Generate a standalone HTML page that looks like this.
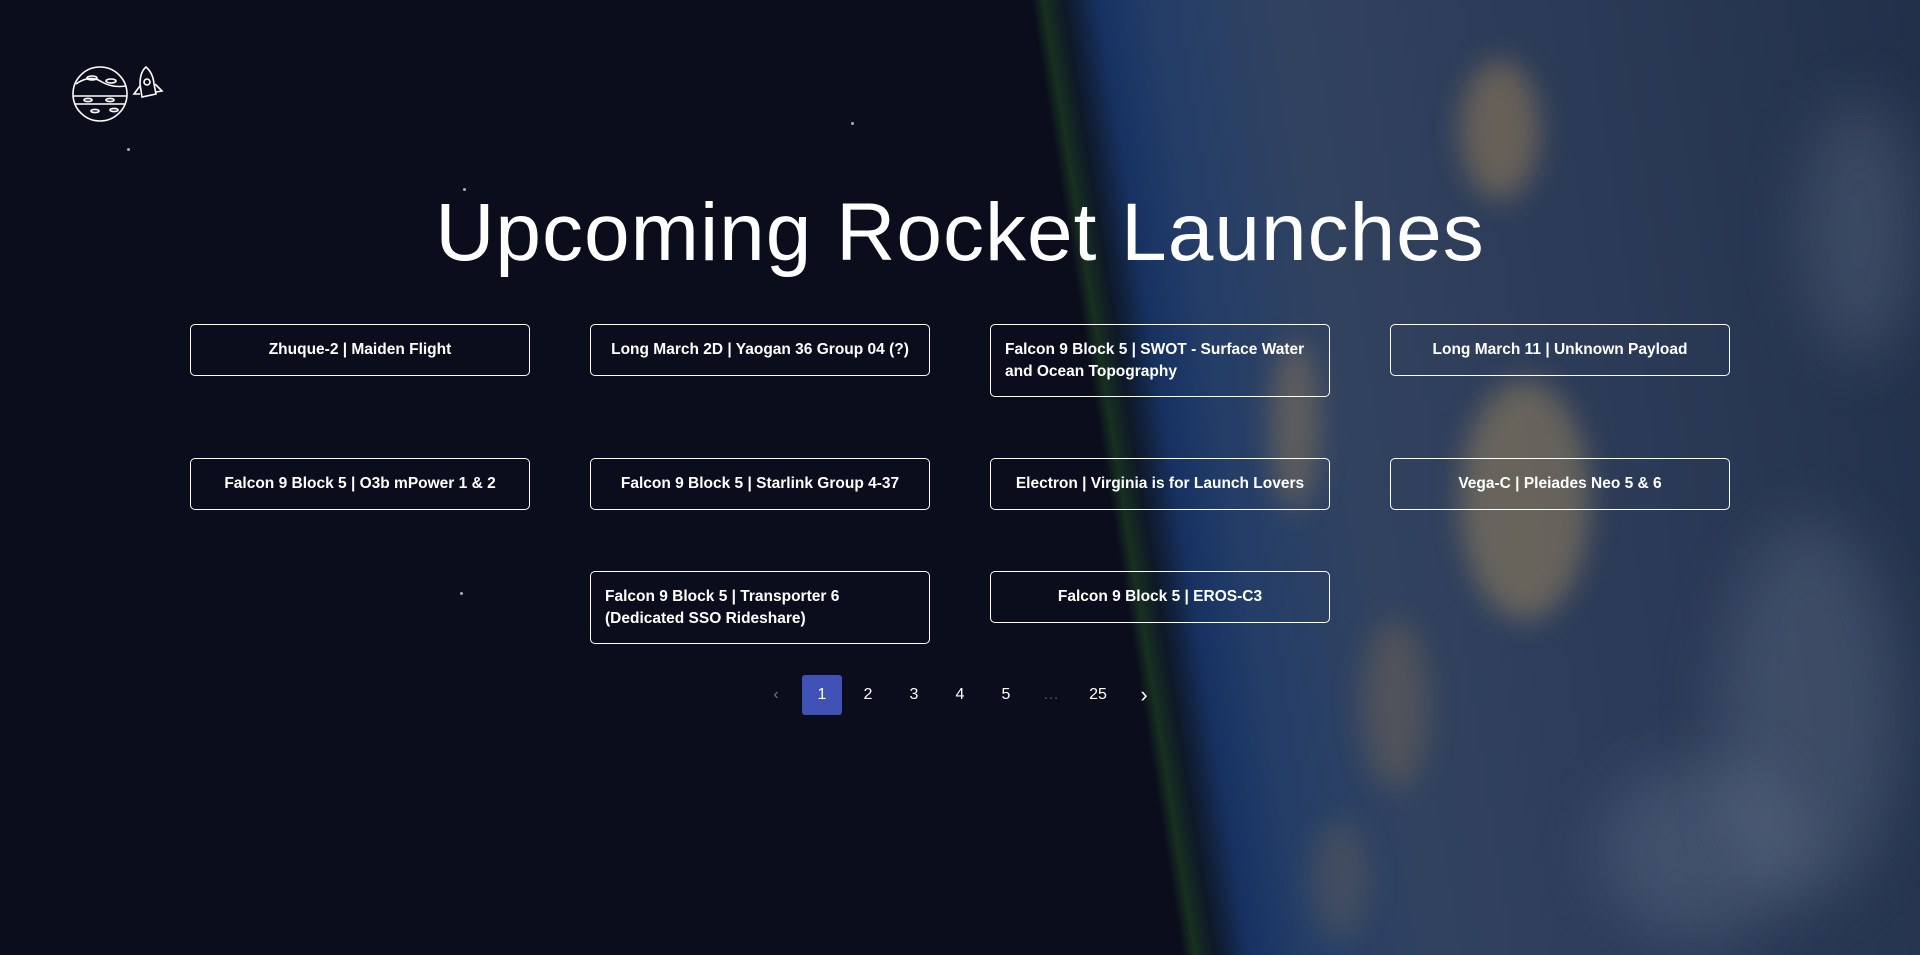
<!DOCTYPE html>
<html><head><meta charset="utf-8"><style>
html,body{margin:0;padding:0;width:1920px;height:955px;overflow:hidden;background:#0b0d1c;font-family:"Liberation Sans",sans-serif;color:#fff;position:relative}
.bg{position:absolute;left:0;top:0;width:1920px;height:955px;overflow:hidden;
background:linear-gradient(81deg,#0b0d1c 0,#0b0d1c 1168px,#17301f 1180px,#0e1828 1200px,#173262 1235px,#243e68 1290px,#31425f 1420px,#2b3a56 1700px,#22304a 2045px)}
.glow{position:absolute;border-radius:50%;filter:blur(14px)}
.cloud{position:absolute;border-radius:50%;filter:blur(30px);background:rgba(190,200,220,.15)}
.star{position:absolute;width:3px;height:3px;border-radius:50%;background:#aab}
h1{position:absolute;left:0;width:1920px;top:186px;margin:0;text-align:center;font-size:82px;font-weight:400;letter-spacing:1px}
.card{position:absolute;width:340px;border:1px solid #fff;border-radius:5px;box-sizing:border-box;display:flex;align-items:center;justify-content:center;text-align:center;font-size:15.5px;font-weight:700;padding:0 14px;line-height:22px;white-space:nowrap}
.l{justify-content:flex-start;text-align:left;white-space:normal}
.pg{position:absolute;top:675px;height:40px;width:40px;line-height:40px;text-align:center;font-size:16px}
</style></head><body>
<div class="bg">
<div class="glow" style="left:1460px;top:60px;width:80px;height:140px;background:rgba(240,180,90,.3)"></div>
<div class="glow" style="left:1460px;top:380px;width:130px;height:240px;background:rgba(240,190,100,.3)"></div>
<div class="glow" style="left:1270px;top:340px;width:50px;height:170px;background:rgba(230,170,80,.28)"></div>
<div class="glow" style="left:1360px;top:620px;width:70px;height:170px;background:rgba(220,160,70,.18)"></div>
<div class="glow" style="left:1310px;top:820px;width:60px;height:120px;background:rgba(220,160,70,.14)"></div>
<div class="cloud" style="left:1720px;top:520px;width:180px;height:380px"></div>
<div class="cloud" style="left:1600px;top:760px;width:200px;height:180px"></div>
<div class="cloud" style="left:1800px;top:100px;width:120px;height:260px"></div>
<div class="star" style="left:463px;top:188px"></div>
<div class="star" style="left:460px;top:592px"></div>
<div class="star" style="left:851px;top:122px"></div>
<div class="star" style="left:127px;top:148px"></div>
</div>
<svg style="position:absolute;left:70px;top:64px" width="100" height="60" viewBox="0 0 100 60" fill="none" stroke="#fff" stroke-width="1.6">
<circle cx="30" cy="30" r="27"/>
<path d="M6 20 Q20 10 32 18 Q42 24 56 22 M4 32 H56 M5 40 H55"/>
<ellipse cx="22" cy="14" rx="5" ry="2"/><ellipse cx="41" cy="17" rx="5" ry="2"/><ellipse cx="18" cy="36" rx="4" ry="1.6"/><ellipse cx="40" cy="36" rx="4" ry="1.6"/><ellipse cx="25" cy="47" rx="4" ry="1.6"/><ellipse cx="44" cy="46" rx="4" ry="1.6"/>
<path d="M70 20 Q70 8 76 3 Q83 9 84 20 L86 30 L72 33 Z"/><circle cx="77" cy="18" r="3"/><path d="M70 22 L64 30 L70 30 M85 20 L92 27 L86 28"/>
</svg>
<h1>Upcoming Rocket Launches</h1>
<div class="card" style="left:190px;top:324px;height:52px">Zhuque-2 | Maiden Flight</div>
<div class="card" style="left:590px;top:324px;height:52px">Long March 2D | Yaogan 36 Group 04 (?)</div>
<div class="card l" style="left:990px;top:324px;height:73px">Falcon 9 Block 5 | SWOT - Surface Water and Ocean Topography</div>
<div class="card" style="left:1390px;top:324px;height:52px">Long March 11 | Unknown Payload</div>
<div class="card" style="left:190px;top:458px;height:52px">Falcon 9 Block 5 | O3b mPower 1 &amp; 2</div>
<div class="card" style="left:590px;top:458px;height:52px">Falcon 9 Block 5 | Starlink Group 4-37</div>
<div class="card" style="left:990px;top:458px;height:52px">Electron | Virginia is for Launch Lovers</div>
<div class="card" style="left:1390px;top:458px;height:52px">Vega-C | Pleiades Neo 5 &amp; 6</div>
<div class="card l" style="left:590px;top:571px;height:73px">Falcon 9 Block 5 | Transporter 6 (Dedicated SSO Rideshare)</div>
<div class="card" style="left:990px;top:571px;height:52px">Falcon 9 Block 5 | EROS-C3</div>
<div class="pg" style="left:756px;color:#777">&#8249;</div>
<div class="pg" style="left:802px;background:#3f51b5;border-radius:3px">1</div>
<div class="pg" style="left:848px">2</div>
<div class="pg" style="left:894px">3</div>
<div class="pg" style="left:940px">4</div>
<div class="pg" style="left:986px">5</div>
<div class="pg" style="left:1031px;color:#555">…</div>
<div class="pg" style="left:1078px">25</div>
<div class="pg" style="left:1124px;font-size:22px">&#8250;</div>
</body></html>
